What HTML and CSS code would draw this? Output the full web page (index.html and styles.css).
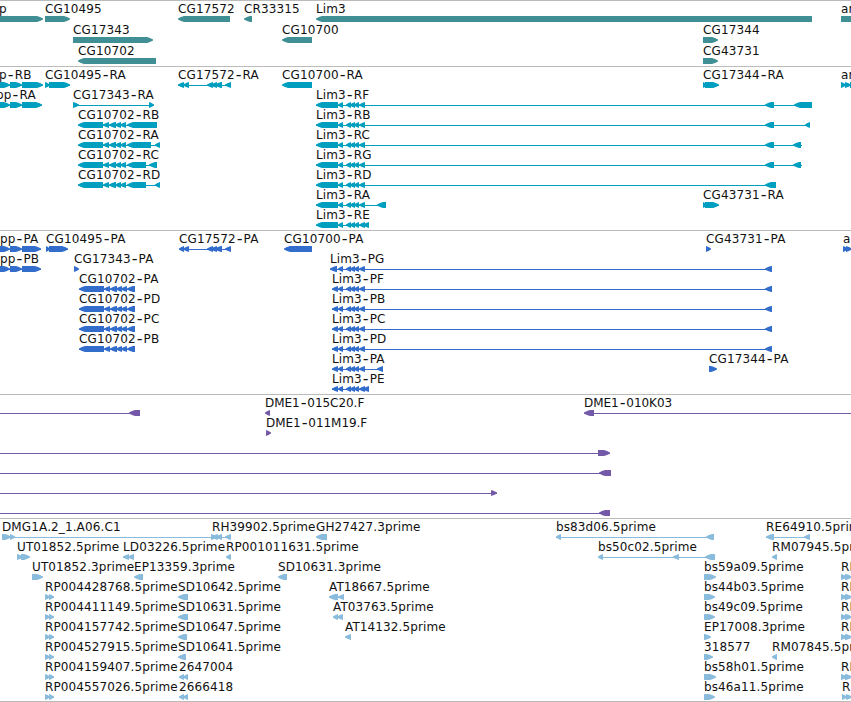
FILE: index.html
```
<!DOCTYPE html>
<html lang="en">
<head>
    <meta charset="UTF-8">
    <meta name="viewport" content="width=device-width, initial-scale=1.0">
    <title>Genome Browser</title>
    <link rel="stylesheet" href="styles.css">
</head>
<body>
    <main class="browser">
        <svg class="track genes" id="genes"></svg>
        <svg class="track transcripts" id="transcripts"></svg>
        <svg class="track proteins" id="proteins"></svg>
        <svg class="track clones" id="clones"></svg>
        <svg class="track ests" id="ests"></svg>
    </main>
    <script src="tracks.js"></script>
</body>
</html>
```
FILE: styles.css
```
/* Reset and base styles */
* {
    box-sizing: border-box;
    margin: 0;
    padding: 0;
}

body {
    background-color: #fff;
    overflow: hidden;
}

.browser {
    display: flex;
    flex-direction: column;
    width: 851px;
    height: 702px;
    border-bottom: 1px solid #bbb;
}

/* Tracks */
.track {
    display: block;
    flex: none;
    width: 100%;
    border-top: 1px solid #bbb;
    overflow: hidden;
}

.track text {
    font-family: "DejaVu Sans", sans-serif;
    font-size: 12px;
    letter-spacing: 0.12px;
    fill: #111;
}

.track .hyphen {
    font-size: 16px;
}

.genes {
    height: 66px;
    color: #3f8f94;
}

.transcripts {
    height: 164px;
    color: #009ebf;
}

.proteins {
    height: 164px;
    color: #326dcc;
}

.clones {
    height: 124px;
    color: #7359a8;
}

.clones text {
    letter-spacing: -0.05px;
}

.ests {
    height: 183px;
    color: #88bbdc;
}

/* Features */
.exon,
.intron {
    fill: currentColor;
}
```
FILE: tracks.js
```
// Each feature: [row, label, direction, exons, options]
const R = 'right';
const L = 'left';

const lim3 = [[338, 343], [346, 351], [350, 355], [354, 359], [359, 365]];
const lim3R = [[316, 338], ...lim3];
const lim3P = [[332, 338], ...lim3];
const cg10702R = [[78, 103], [103, 109], [109, 116], [115, 121], [120, 126]];
const cg10702P = [[79, 104], [104, 110], [110, 117], [116, 122], [121, 127], [127, 135]];

const genes = [
    [0, 'p', R, [[-10, 43]], { x: -1 }],
    [0, 'CG10495', R, [[45, 70]]],
    [0, 'CG17572', L, [[178, 230]]],
    [0, 'CR33315', L, [[244, 252]]],
    [0, 'Lim3', L, [[316, 812]]],
    [0, 'ar', R, [[841, 870]]],
    [1, 'CG17343', R, [[73, 153]]],
    [1, 'CG10700', L, [[282, 312]]],
    [1, 'CG17344', R, [[703, 718]]],
    [2, 'CG10702', L, [[78, 156]]],
    [2, 'CG43731', R, [[703, 718]]]
];

const transcripts = [
    [0, 'p-RB', R, [[-10, 10], [10, 22], [22, 43]], { x: -1 }],
    [0, 'CG10495-RA', R, [[45, 50], [49, 70]]],
    [0, 'CG17572-RA', L, [[178, 184], [183, 189], [207, 213], [211, 217], [215, 222], [225, 231]]],
    [0, 'CG10700-RA', L, [[282, 312]]],
    [0, 'CG17344-RA', R, [[703, 707], [705, 719]]],
    [0, 'ar', R, [[841, 846], [845, 851], [850, 860]]],
    [1, 'pp-RA', R, [[-10, 10], [10, 22], [22, 42]], { x: -4 }],
    [1, 'CG17343-RA', R, [[73, 79], [149, 154]]],
    [1, 'Lim3-RF', L, [...lim3R, [765, 774], [794, 812]]],
    [2, 'CG10702-RB', L, [...cg10702R, [127, 157]]],
    [2, 'Lim3-RB', L, [...lim3R, [765, 774], [805, 810]]],
    [3, 'CG10702-RA', L, [...cg10702R, [127, 151], [155, 160]]],
    [3, 'Lim3-RC', L, [...lim3R, [765, 774], [793, 801]], { to: 802 }],
    [4, 'CG10702-RC', L, [...cg10702R, [127, 146], [149, 157]]],
    [4, 'Lim3-RG', L, [...lim3R, [765, 774], [793, 801]], { to: 802 }],
    [5, 'CG10702-RD', L, [...cg10702R, [127, 146], [155, 160]]],
    [5, 'Lim3-RD', L, [...lim3R, [765, 776]]],
    [6, 'Lim3-RA', L, [...lim3R, [377, 386]]],
    [6, 'CG43731-RA', R, [[703, 707], [705, 719]]],
    [7, 'Lim3-RE', L, [...lim3R, [363, 369]]]
];

const proteins = [
    [0, 'pp-PA', R, [[-10, 10], [10, 22], [22, 41]], { x: 0 }],
    [0, 'CG10495-PA', R, [[46, 50], [49, 68]]],
    [0, 'CG17572-PA', L, [[179, 184], [183, 189], [207, 213], [211, 217], [215, 222], [225, 231]]],
    [0, 'CG10700-PA', L, [[284, 312]]],
    [0, 'CG43731-PA', R, [[706, 711]]],
    [0, 'a', R, [[843, 848], [846, 852]]],
    [1, 'pp-PB', R, [[-10, 10], [10, 22], [22, 41]], { x: 0 }],
    [1, 'CG17343-PA', R, [[74, 79]]],
    [1, 'Lim3-PG', L, [[330, 337], ...lim3, [765, 772]]],
    [2, 'CG10702-PA', L, cg10702P],
    [2, 'Lim3-PF', L, [...lim3P, [765, 772]]],
    [3, 'CG10702-PD', L, cg10702P],
    [3, 'Lim3-PB', L, [...lim3P, [765, 772]]],
    [4, 'CG10702-PC', L, cg10702P],
    [4, 'Lim3-PC', L, [...lim3P, [765, 772]]],
    [5, 'CG10702-PB', L, cg10702P],
    [5, 'Lim3-PD', L, [...lim3P, [765, 772]]],
    [6, 'Lim3-PA', L, [...lim3P, [377, 383]]],
    [6, 'CG17344-PA', R, [[709, 717]]],
    [7, 'Lim3-PE', L, [...lim3P, [363, 369]]]
];

const clones = [
    [0, '', L, [[129, 140]], { from: -10 }],
    [0, 'DME1-015C20.F', L, [[265, 270]]],
    [0, 'DME1-010K03', L, [[584, 594]], { to: 860 }],
    [1, 'DME1-011M19.F', R, [[266, 271]]],
    [2, '', R, [[598, 610]], { from: -10 }],
    [3, '', L, [[599, 611]], { from: -10 }],
    [4, '', R, [[491, 497]], { from: -10 }],
    [5, '', L, [[599, 610]], { from: -10 }]
];

const ests = [
    [0, 'DMG1A.2_1.A06.C1', R, [[2, 11], [10, 15], [211, 217]]],
    [0, 'RH39902.5prime', L, [[212, 218], [216, 222], [225, 231]]],
    [0, 'GH27427.3prime', L, [[316, 327]]],
    [0, 'bs83d06.5prime', L, [[556, 561], [706, 714]]],
    [0, 'RE64910.5prime', L, [[766, 774], [804, 810]]],
    [1, 'UT01852.5prime', R, [[17, 23], [21, 30]]],
    [1, 'LD03226.5prime', L, [[123, 129], [128, 134]]],
    [1, 'RP001011631.5prime', L, [[226, 231]]],
    [1, 'bs50c02.5prime', L, [[598, 603], [673, 679], [705, 715]]],
    [1, 'RM07945.5prime', L, [[772, 777]]],
    [2, 'UT01852.3prime', R, [[32, 43]]],
    [2, 'EP13359.3prime', L, [[134, 143]]],
    [2, 'SD10631.3prime', L, [[278, 287]]],
    [2, 'bs59a09.5prime', R, [[704, 716]]],
    [3, 'SD10642.5prime', L, [[178, 188]]],
    [3, 'AT18667.5prime', L, [[329, 338], [338, 344]]],
    [3, 'bs44b03.5prime', R, [[704, 715]]],
    [4, 'SD10631.5prime', L, [[178, 188]]],
    [4, 'AT03763.5prime', L, [[333, 338], [337, 343]]],
    [4, 'bs49c09.5prime', R, [[704, 715]]],
    [5, 'SD10647.5prime', L, [[178, 187]]],
    [5, 'AT14132.5prime', L, [[345, 351]]],
    [5, 'EP17008.3prime', R, [[704, 711]]],
    [6, 'SD10641.5prime', L, [[178, 186]]],
    [6, '318577', R, [[704, 713]]],
    [6, 'RM07845.5prime', L, [[772, 777]]],
    [7, '2647004', L, [[179, 184], [183, 188]]],
    [7, 'bs58h01.5prime', R, [[704, 716]]],
    [8, '2666418', L, [[179, 184], [183, 188]]],
    [8, 'bs46a11.5prime', R, [[704, 715]]]
];

// Repeated reads share the same two exons
['RP004428768', 'RP004411149', 'RP004157742', 'RP004527915', 'RP004159407', 'RP004557026'].forEach((name, i) => {
    ests.push([i + 3, name + '.5prime', R, [[45, 50], [49, 54]]]);
});
[2, 3, 4, 5, 7].forEach((row) => {
    ests.push([row, 'RE', R, [[841, 847], [845, 852]]]);
});
ests.push([8, 'R', R, [[842, 847], [846, 852]]]);

// Bar with a slightly rounded pointed end, 6px high
const exonPath = (start, end, y, dir) => {
    const tip = Math.min(6, end - start);
    const [tail, head, step] = dir === R ? [start, end, -tip] : [end, start, tip];
    return `M${tail} ${y}H${head + step}L${head + step / 2} ${y + 1}L${head} ${y + 2.5}V${y + 3.5}` +
        `L${head + step / 2} ${y + 5}L${head + step} ${y + 6}H${tail}Z`;
};

const renderTrack = (id, features, rowHeight) => {
    let html = '';
    features.forEach(([row, label, dir, exons, opts = {}]) => {
        const top = row * rowHeight;
        const from = opts.from ?? exons[0][0];
        const to = opts.to ?? exons[exons.length - 1][1];
        const x = opts.x ?? exons[0][0];

        if (exons.length > 1 || opts.from !== undefined || opts.to !== undefined) {
            html += `<rect class="intron" x="${from}" y="${top + 18}" width="${to - from}" height="1"/>`;
        }
        exons.forEach(([start, end]) => {
            html += `<path class="exon" d="${exonPath(start, end, top + 15, dir)}"/>`;
        });
        if (label) {
            // Wider hyphen, lowered to stay at mid height
            const text = label.replace(/-(.)/, '<tspan class="hyphen" dx="1" dy="1">-</tspan><tspan dx="1" dy="-1">$1</tspan>');
            html += `<text x="${x}" y="${top + 12}">${text}</text>`;
        }
    });
    document.getElementById(id).innerHTML = html;
};

renderTrack('genes', genes, 21);
renderTrack('transcripts', transcripts, 20);
renderTrack('proteins', proteins, 20);
renderTrack('clones', clones, 20);
renderTrack('ests', ests, 20);
```
